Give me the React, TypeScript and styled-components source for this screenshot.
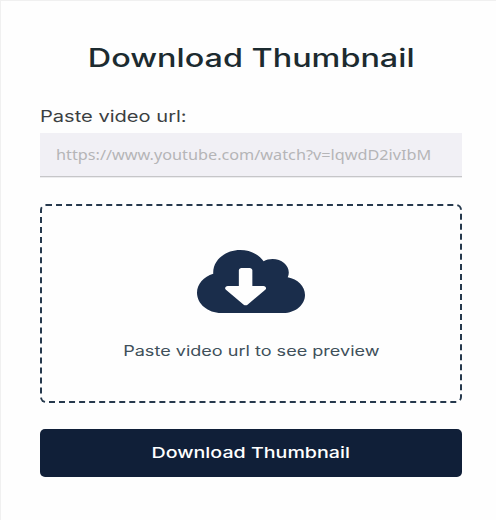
import React from "react";
import styled, { createGlobalStyle } from "styled-components";

const GlobalStyle = createGlobalStyle`
  *, *::before, *::after { box-sizing: border-box; }
  body { margin: 0; background: #fff; }
`;

const Card = styled.main`
  width: 496px;
  height: 520px;
  padding: 38px 34px 0 39px;
  display: flex;
  flex-direction: column;
  background: #fefefe;
  border: solid #f0f0f0;
  border-width: 1px 0 0 1px;
  font-family: Inter, "Open Sans", sans-serif;
`;

const Wide = styled.span<{ $stretch: number; $origin?: string }>`
  display: inline-block;
  white-space: nowrap;
  transform: scaleX(${(p) => p.$stretch});
  transform-origin: ${(p) => p.$origin ?? "center"};
`;

const Title = styled.h1`
  margin: 0;
  height: 38px;
  line-height: 38px;
  text-align: center;
  font-size: 25px;
  font-weight: 500;
  color: #1c2b30;
`;

const Label = styled.label`
  margin-top: 27px;
  height: 24px;
  line-height: 24px;
  font-size: 16px;
  color: #3b3f42;
`;

const Field = styled.div`
  margin-top: 5px;
  height: 44px;
  padding-left: 16px;
  line-height: 44px;
  background: #f1f0f5;
  border-bottom: 1px solid #c6c6c8;
  box-shadow: 0 1px 0 #ececee;
  font-family: "Noto Sans", sans-serif;
  font-size: 14px;
  color: #b5b5b7;
`;

const Preview = styled.section`
  margin-top: 27px;
  height: 199px;
  padding-top: 44px;
  display: flex;
  flex-direction: column;
  align-items: center;
  border: 2px dashed #26394d;
  border-radius: 6px;
`;

const Cloud = styled.svg`
  display: block;
  width: 108px;
  height: 63px;
  fill: #1a2d4b;
`;

const Hint = styled.p`
  margin: 26px 0 0;
  height: 24px;
  line-height: 24px;
  font-size: 14px;
  color: #40505a;
`;

const Button = styled.button`
  margin-top: 26px;
  height: 48px;
  padding: 0;
  border: 0;
  border-radius: 5px;
  background: #101f38;
  color: #fff;
  font: 500 15px/48px Inter, "Open Sans", sans-serif;
`;

export default function App() {
  return (
    <>
      <GlobalStyle />
      <Card>
        <Title><Wide $stretch={1.295}>Download Thumbnail</Wide></Title>
        <Label><Wide $stretch={1.255} $origin="left">Paste video url:</Wide></Label>
        <Field>
          <Wide $stretch={1.16} $origin="left">https://www.youtube.com/watch?v=lqwdD2ivIbM</Wide>
        </Field>
        <Preview>
          <Cloud viewBox="0 32 640 448" preserveAspectRatio="none" aria-hidden="true">
            <path d="M537.6 226.6c4.1-10.7 6.4-22.4 6.4-34.6 0-53-43-96-96-96-19.7 0-38.1 6-53.3 16.2C367 64.2 315.3 32 256 32c-88.4 0-160 71.6-160 160 0 2.7.1 5.4.2 8.1C40.2 219.8 0 273.2 0 336c0 79.5 64.5 144 144 144h368c70.7 0 128-57.3 128-128 0-61.9-44-113.6-102.4-125.4zm-132.9 88.7L299.3 420.7c-6.2 6.2-16.4 6.2-22.6 0L171.3 315.3c-10.1-10.1-2.9-27.3 11.3-27.3H248V176c0-8.8 7.2-16 16-16h48c8.8 0 16 7.2 16 16v112h65.4c14.2 0 21.4 17.2 11.3 27.3z" />
          </Cloud>
          <Hint><Wide $stretch={1.29}>Paste video url to see preview</Wide></Hint>
        </Preview>
        <Button type="button"><Wide $stretch={1.31}>Download Thumbnail</Wide></Button>
      </Card>
    </>
  );
}
